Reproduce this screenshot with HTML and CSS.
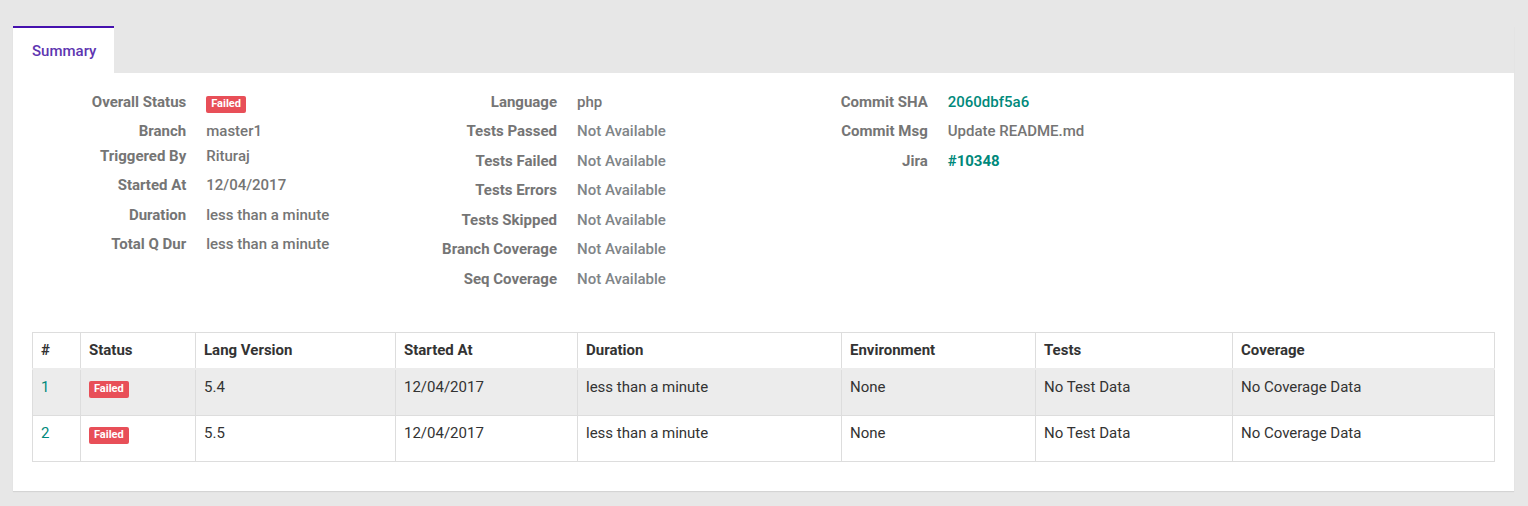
FILE: index.html
```html
<!DOCTYPE html>
<html lang="en">
<head>
<meta charset="utf-8">
<title>Build summary</title>
<link rel="stylesheet" href="styles.css">
</head>
<body>
<main class="panel">
  <nav class="tabs"><a class="tab" href="#summary" aria-current="page">Summary</a></nav>
  <section class="content" id="summary">
    <div class="details">
      <dl class="facts">
        <div class="fact"><dt>Overall Status</dt><dd><span class="badge">Failed</span></dd></div>
        <div class="fact fact-tight"><dt>Branch</dt><dd>master1</dd></div>
        <div class="fact"><dt>Triggered By</dt><dd>Rituraj</dd></div>
        <div class="fact"><dt>Started At</dt><dd>12/04/2017</dd></div>
        <div class="fact"><dt>Duration</dt><dd>less than a minute</dd></div>
        <div class="fact"><dt>Total Q Dur</dt><dd>less than a minute</dd></div>
      </dl>
      <dl class="facts">
        <div class="fact"><dt>Language</dt><dd>php</dd></div>
        <div class="fact"><dt>Tests Passed</dt><dd class="muted">Not Available</dd></div>
        <div class="fact"><dt>Tests Failed</dt><dd class="muted">Not Available</dd></div>
        <div class="fact"><dt>Tests Errors</dt><dd class="muted">Not Available</dd></div>
        <div class="fact"><dt>Tests Skipped</dt><dd class="muted">Not Available</dd></div>
        <div class="fact"><dt>Branch Coverage</dt><dd class="muted">Not Available</dd></div>
        <div class="fact"><dt>Seq Coverage</dt><dd class="muted">Not Available</dd></div>
      </dl>
      <dl class="facts">
        <div class="fact"><dt>Commit SHA</dt><dd><a href="#commit">2060dbf5a6</a></dd></div>
        <div class="fact"><dt>Commit Msg</dt><dd>Update README.md</dd></div>
        <div class="fact"><dt>Jira</dt><dd><a class="ticket" href="#jira">#10348</a></dd></div>
      </dl>
    </div>
    <table class="runs">
      <colgroup>
        <col class="col-number"><col class="col-status"><col class="col-version"><col class="col-started">
        <col class="col-duration"><col class="col-env"><col class="col-tests"><col>
      </colgroup>
      <thead>
        <tr><th scope="col">#</th><th scope="col">Status</th><th scope="col">Lang Version</th><th scope="col">Started At</th><th scope="col">Duration</th><th scope="col">Environment</th><th scope="col">Tests</th><th scope="col">Coverage</th></tr>
      </thead>
      <tbody>
        <tr><td><a href="#run-1">1</a></td><td><span class="badge">Failed</span></td><td>5.4</td><td>12/04/2017</td><td>less than a minute</td><td>None</td><td>No Test Data</td><td>No Coverage Data</td></tr>
        <tr><td><a href="#run-2">2</a></td><td><span class="badge">Failed</span></td><td>5.5</td><td>12/04/2017</td><td>less than a minute</td><td>None</td><td>No Test Data</td><td>No Coverage Data</td></tr>
      </tbody>
    </table>
  </section>
</main>
</body>
</html>
```

FILE: styles.css
```css
* { box-sizing: border-box; }

body {
  margin: 0;
  padding: 26px 14px 15px 13px;
  background: #e7e7e7;
  color: #333;
  font: 15px/20px Roboto, "Liberation Sans", sans-serif;
}

a { color: #00897b; text-decoration: none; }

.panel { box-shadow: 0 1px 1px rgba(0, 0, 0, 0.08); }

.tabs { display: flex; background: #e7e7e7; }

.tab {
  padding: 13px 18px 12px 19px;
  border-top: 2px solid #4511ae;
  background: #fff;
  color: #5e35b1;
  font-weight: 500;
}

.content { padding: 17px 19px 29px; background: #fff; }

.details {
  display: grid;
  grid-template-columns: repeat(4, 1fr);
  margin: 0 -10px 36px;
}

.facts { margin: 0; color: #757575; font-weight: 500; }

.fact {
  display: grid;
  grid-template-columns: 47% 1fr;
  margin-bottom: 4px;
  line-height: 25px;
}

.fact:nth-child(even) { margin-bottom: 5px; }
.fact.fact-tight { margin-bottom: 0; }

.fact dt { padding-right: 10px; text-align: right; font-weight: 700; }
.fact dd { margin: 0; padding-left: 10px; white-space: nowrap; }
.muted { color: #808588; }
.ticket { font-weight: 700; }

.badge {
  display: inline-block;
  padding: 2px 5px 3px;
  border-radius: 2px;
  background: #e84f58;
  color: #fff;
  font-size: 11px;
  font-weight: 700;
  line-height: 12px;
}

.runs {
  width: 100%;
  border-collapse: collapse;
  table-layout: fixed;
}

.runs th, .runs td {
  padding: 7px 8px 8px;
  border: 1px solid #ddd;
  text-align: left;
  vertical-align: top;
}

.runs th { height: 36px; border-bottom: 2px solid #ececec; }
.runs td { height: 46px; }
.runs tbody tr:nth-child(odd) { background: #ececec; }

.col-number { width: 48px; }
.col-status { width: 115px; }
.col-version { width: 200px; }
.col-started { width: 182px; }
.col-duration { width: 264px; }
.col-env { width: 194px; }
.col-tests { width: 197px; }
```
